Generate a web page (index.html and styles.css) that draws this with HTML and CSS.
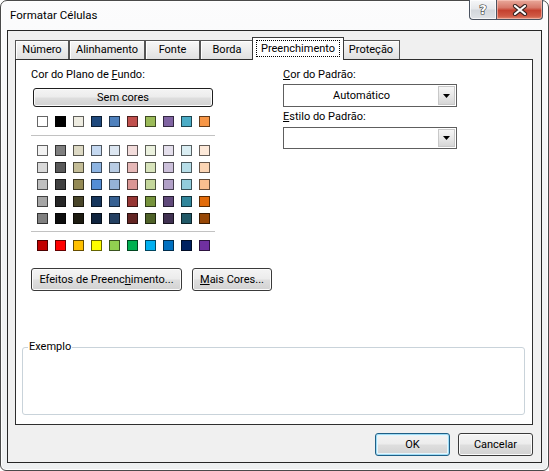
FILE: index.html
```html
<!DOCTYPE html>
<html lang="pt">
<head>
<meta charset="utf-8">
<title>Formatar Células</title>
<link rel="stylesheet" href="styles.css">
</head>
<body>
<div class="window">
  <div class="titlebar">
    <div class="title">Formatar Células</div>
    <div class="caption-buttons">
      <div class="cap-btn help"><span class="help-glyph">?</span></div>
      <div class="cap-btn close">
        <svg width="16" height="12" viewBox="0 0 16 12">
          <path d="M3 2 L13 10 M13 2 L3 10" stroke="#3a2420" stroke-width="4.2" stroke-linecap="round"/>
          <path d="M3 2 L13 10 M13 2 L3 10" stroke="#ffffff" stroke-width="2.2" stroke-linecap="round"/>
        </svg>
      </div>
    </div>
  </div>
  <div class="client">
    <div class="tabs">
      <div class="tab t-num">Número</div>
      <div class="tab t-ali">Alinhamento</div>
      <div class="tab t-fon">Fonte</div>
      <div class="tab t-bor">Borda</div>
      <div class="tab tab-active"><span class="focus">Preenchimento</span></div>
      <div class="tab t-pro">Proteção</div>
    </div>
    <div class="panel">
      <div class="top">
        <div class="left-col">
          <div class="label">Cor do Plano de <u>F</u>undo:</div>
          <div class="btn btn-wide">Sem cores</div>
          <div class="swatches theme">
            <span class="sw" style="background:#FFFFFF"></span>
            <span class="sw" style="background:#000000"></span>
            <span class="sw" style="background:#EEECE1"></span>
            <span class="sw" style="background:#1F497D"></span>
            <span class="sw" style="background:#4F81BD"></span>
            <span class="sw" style="background:#C0504D"></span>
            <span class="sw" style="background:#9BBB59"></span>
            <span class="sw" style="background:#8064A2"></span>
            <span class="sw" style="background:#4BACC6"></span>
            <span class="sw" style="background:#F79646"></span>
          </div>
          <div class="sep"></div>
          <div class="swatches tints">
            <span class="sw" style="background:#F2F2F2"></span>
            <span class="sw" style="background:#7F7F7F"></span>
            <span class="sw" style="background:#DDD9C4"></span>
            <span class="sw" style="background:#C5D9F1"></span>
            <span class="sw" style="background:#DCE6F1"></span>
            <span class="sw" style="background:#F2DCDB"></span>
            <span class="sw" style="background:#EBF1DE"></span>
            <span class="sw" style="background:#E4DFEC"></span>
            <span class="sw" style="background:#DAEEF3"></span>
            <span class="sw" style="background:#FDE9D9"></span>

            <span class="sw" style="background:#D9D9D9"></span>
            <span class="sw" style="background:#595959"></span>
            <span class="sw" style="background:#C4BD97"></span>
            <span class="sw" style="background:#8DB4E2"></span>
            <span class="sw" style="background:#B8CCE4"></span>
            <span class="sw" style="background:#E6B8B7"></span>
            <span class="sw" style="background:#D8E4BC"></span>
            <span class="sw" style="background:#CCC0DA"></span>
            <span class="sw" style="background:#B7DEE8"></span>
            <span class="sw" style="background:#FCD5B4"></span>

            <span class="sw" style="background:#BFBFBF"></span>
            <span class="sw" style="background:#404040"></span>
            <span class="sw" style="background:#948A54"></span>
            <span class="sw" style="background:#538DD5"></span>
            <span class="sw" style="background:#95B3D7"></span>
            <span class="sw" style="background:#DA9694"></span>
            <span class="sw" style="background:#C4D79B"></span>
            <span class="sw" style="background:#B1A0C7"></span>
            <span class="sw" style="background:#92CDDC"></span>
            <span class="sw" style="background:#FABF8F"></span>

            <span class="sw" style="background:#A6A6A6"></span>
            <span class="sw" style="background:#262626"></span>
            <span class="sw" style="background:#494529"></span>
            <span class="sw" style="background:#16365C"></span>
            <span class="sw" style="background:#366092"></span>
            <span class="sw" style="background:#963634"></span>
            <span class="sw" style="background:#76933C"></span>
            <span class="sw" style="background:#60497A"></span>
            <span class="sw" style="background:#31869B"></span>
            <span class="sw" style="background:#E26B0A"></span>

            <span class="sw" style="background:#808080"></span>
            <span class="sw" style="background:#0D0D0D"></span>
            <span class="sw" style="background:#1D1B10"></span>
            <span class="sw" style="background:#0F243E"></span>
            <span class="sw" style="background:#244062"></span>
            <span class="sw" style="background:#632523"></span>
            <span class="sw" style="background:#4F6228"></span>
            <span class="sw" style="background:#403151"></span>
            <span class="sw" style="background:#215967"></span>
            <span class="sw" style="background:#974706"></span>
          </div>
          <div class="sep sep-b"></div>
          <div class="swatches standard">
            <span class="sw" style="background:#C00000"></span>
            <span class="sw" style="background:#FF0000"></span>
            <span class="sw" style="background:#FFC000"></span>
            <span class="sw" style="background:#FFFF00"></span>
            <span class="sw" style="background:#92D050"></span>
            <span class="sw" style="background:#00B050"></span>
            <span class="sw" style="background:#00B0F0"></span>
            <span class="sw" style="background:#0070C0"></span>
            <span class="sw" style="background:#002060"></span>
            <span class="sw" style="background:#7030A0"></span>
          </div>
        </div>
        <div class="right-col">
          <div class="label"><u>C</u>or do Padrão:</div>
          <div class="combo">
            <div class="combo-text">Automático</div>
            <div class="combo-btn"><svg width="7" height="4" viewBox="0 0 7 4"><polygon points="0,0 7,0 3.5,4" fill="#000"/></svg></div>
          </div>
          <div class="label label-2"><u>E</u>stilo do Padrão:</div>
          <div class="combo combo-2">
            <div class="combo-text"></div>
            <div class="combo-btn"><svg width="7" height="4" viewBox="0 0 7 4"><polygon points="0,0 7,0 3.5,4" fill="#000"/></svg></div>
          </div>
        </div>
      </div>
      <div class="action-row">
        <div class="btn btn-effects">Efeitos de Preenc<u>h</u>imento...</div>
        <div class="btn btn-more"><u>M</u>ais Cores...</div>
      </div>
      <fieldset class="sample">
        <legend>Exemplo</legend>
      </fieldset>
    </div>
    <div class="footer">
      <div class="btn btn-dlg btn-default">OK</div>
      <div class="btn btn-dlg">Cancelar</div>
    </div>
  </div>
</div>
</body>
</html>
```
FILE: styles.css
```css
html, body {
  margin: 0;
  padding: 0;
}
body {
  width: 549px;
  height: 471px;
  overflow: hidden;
  background: #ffffff;
  font-family: Roboto, "Liberation Sans", sans-serif;
  font-size: 11px;
  color: #000;
}
u { text-decoration: underline; text-underline-offset: 1px; }

.window {
  box-sizing: border-box;
  width: 549px;
  height: 471px;
  border: 1px solid #4a4a4a;
  border-radius: 7px 7px 6px 6px;
  background: linear-gradient(to bottom, #fcfcfd 0%, #f3f4f5 40%, #eef0f1 100%);
  box-shadow: inset 0 0 0 1px rgba(255,255,255,0.9);
  display: flex;
  flex-direction: column;
}

/* title bar */
.titlebar {
  height: 29px;
  display: flex;
  align-items: flex-start;
  padding-left: 9px;
}
.title {
  font-size: 11.5px;
  line-height: 29px;
  color: #000;
}
.caption-buttons {
  margin-left: auto;
  margin-right: 5px;
  margin-top: -1px;
  display: flex;
}
.cap-btn {
  box-sizing: border-box;
  height: 20px;
  display: flex;
  align-items: center;
  justify-content: center;
  border: 1px solid #4b5360;
  border-top: none;
}
.help {
  width: 27px;
  border-radius: 0 0 0 4px;
  border-right: none;
  background: linear-gradient(to bottom, #f6f7f8 0%, #e6e8eb 45%, #d3d7dc 55%, #dfe2e6 100%);
  box-shadow: inset 0 0 0 1px rgba(255,255,255,0.7);
}
.help-glyph {
  font-family: "DejaVu Sans", sans-serif;
  font-weight: bold;
  font-size: 13px;
  line-height: 1;
  color: #ffffff;
  -webkit-text-stroke: 1.2px #3c3c3c;
  paint-order: stroke fill;
}
.close {
  width: 47px;
  border-radius: 0 0 4px 0;
  background: linear-gradient(to bottom, #e9a99b 0%, #d7796a 40%, #c5412f 55%, #d05a45 85%, #e08a70 100%);
  box-shadow: inset 0 0 0 1px rgba(255,210,200,0.55);
}

/* client area */
.client {
  flex: 1;
  margin: 0 6px 7px 6px;
  border: 1px solid #262626;
  background: #f0f0f0;
  display: flex;
  flex-direction: column;
}

/* tabs */
.tabs {
  margin-top: 6px;
  height: 22px;
  padding-left: 7px;
  display: flex;
  align-items: flex-end;
  position: relative;
  z-index: 1;
}
.tab {
  box-sizing: border-box;
  height: 19px;
  border: 1px solid #555;
  border-bottom: none;
  background: linear-gradient(to bottom, #f7f7f7 0%, #ececec 50%, #e0e0e0 100%);
  box-shadow: inset 1px 1px 0 #ffffff;
  text-align: center;
  line-height: 17px;
  white-space: nowrap;
}
.t-num { width: 54px; }
.t-ali { width: 76px; }
.t-fon { width: 55px; }
.t-bor { width: 54px; }
.t-pro { width: 58px; }
.tab-active {
  width: 92px;
  height: 23px;
  margin: 0 -2px -1px -2px;
  background: #ffffff;
  box-shadow: none;
  position: relative;
  z-index: 2;
  border-color: #3a3a3a;
}
.focus {
  display: inline-block;
  margin-top: 2px;
  padding: 0 4px;
  line-height: 15px;
  border: 1px dotted #000;
}

/* panel */
.panel {
  box-sizing: border-box;
  height: 366px;
  margin: 0 8px 0 7px;
  border: 1px solid #2e2e2e;
  background: #ffffff;
  display: flex;
  flex-direction: column;
}
.top {
  display: flex;
  padding: 7px 0 0 15px;
}
.left-col {
  width: 184px;
}
.label {
  line-height: 16px;
  white-space: nowrap;
}
.btn {
  box-sizing: border-box;
  border: 1px solid #3a3a3a;
  border-radius: 3px;
  background: linear-gradient(to bottom, #f4f4f4 0%, #ececec 48%, #dedede 52%, #d2d2d2 100%);
  box-shadow: inset 0 0 0 1px #fbfbfb;
  text-align: center;
  white-space: nowrap;
}
.btn-wide {
  margin: 5px 0 0 2px;
  width: 180px;
  height: 19px;
  line-height: 17px;
  border-color: #1e1e1e;
}
.swatches {
  display: grid;
  grid-template-columns: repeat(10, 11px);
  grid-auto-rows: 11px;
  column-gap: 7px;
  row-gap: 6px;
  padding-left: 6px;
}
.theme { margin-top: 9px; }
.tints { margin-top: 9px; }
.standard { margin-top: 8px; }
.sw {
  box-sizing: border-box;
  width: 11px;
  height: 11px;
  border: 1px solid rgba(0,0,0,0.6);
}
.sep {
  margin-top: 8px;
  width: 184px;
  height: 1px;
  background: #c2c2c2;
}
.sep-b { margin-top: 7px; }

.right-col {
  margin-left: 68px;
  width: 174px;
}
.combo {
  box-sizing: border-box;
  width: 174px;
  height: 23px;
  margin-top: 1px;
  border: 1px solid #5e5e5e;
  background: #ffffff;
  display: flex;
  padding: 1px;
}
.combo-text {
  flex: 1;
  text-align: center;
  line-height: 19px;
}
.combo-btn {
  box-sizing: border-box;
  width: 17px;
  border: 1px solid #c8c8c8;
  background: linear-gradient(to bottom, #f6f6f6 0%, #e8e8e8 50%, #d6d6d6 100%);
  display: flex;
  align-items: center;
  justify-content: center;
}
.label-2 { margin-top: 2px; }
.combo-2 { margin-top: 2px; height: 22px; }

.action-row {
  display: flex;
  gap: 10px;
  padding-left: 15px;
  margin-top: 17px;
}
.btn-effects, .btn-more {
  height: 23px;
  line-height: 21px;
}
.btn-effects { width: 151px; }
.btn-more { width: 80px; }

.sample {
  box-sizing: border-box;
  margin: auto 7px 9px 6px;
  padding: 0 5px;
  height: 75px;
  min-width: 0;
  border: 1px solid #c9d3da;
  border-radius: 3px;
}
.sample legend {
  padding: 0 1px;
  line-height: 14px;
}

/* footer */
.footer {
  display: flex;
  justify-content: flex-end;
  gap: 8px;
  margin-top: 8px;
  padding-right: 8px;
}
.btn-dlg {
  width: 75px;
  height: 23px;
  line-height: 21px;
}
.btn-default {
  border-color: #1f5f86;
  box-shadow: inset 0 0 0 1px #9fdcf5, inset 0 0 0 2px #e6f5fc;
}
```
